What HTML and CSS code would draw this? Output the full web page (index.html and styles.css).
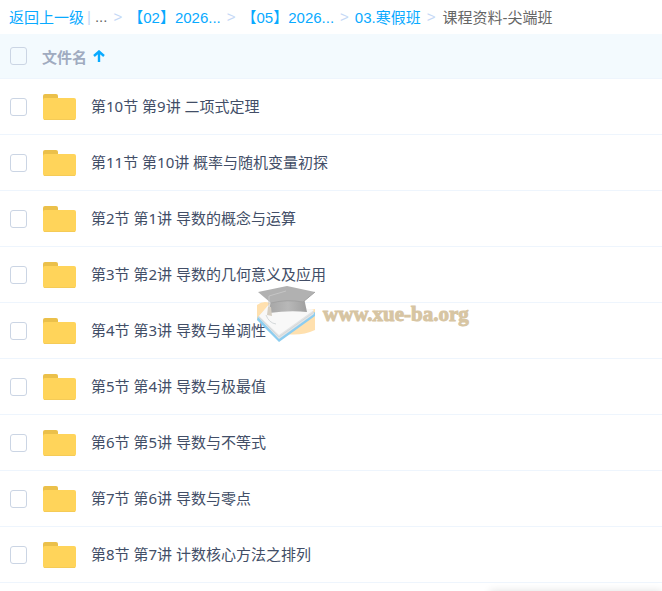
FILE: index.html
```html
<!DOCTYPE html>
<html lang="zh-CN">
<head>
    <meta charset="UTF-8">
    <meta name="viewport" content="width=device-width, initial-scale=1.0">
    <title>课程资料-尖端班</title>
    <link rel="stylesheet" href="styles.css">
</head>
<body>
    <svg class="sprite" aria-hidden="true">
        <symbol id="folder" viewBox="0 0 34 28">
            <path d="M1 10V3Q1 1 3 1H14Q16 1 16 3V10Z" fill="#ebc04a"/>
            <rect x="1" y="5" width="33" height="22" rx="2" fill="#ffd45a"/>
            <path d="M2 26.5H33" stroke="#f5cb57" stroke-width="1"/>
        </symbol>
    </svg>

    <nav class="breadcrumb">
        <a href="#">返回上一级</a>
        <span class="divider">|</span>
        <span class="dots">...</span>
        <span class="arrow">&gt;</span>
        <a href="#">【02】2026...</a>
        <span class="arrow">&gt;</span>
        <a href="#">【05】2026...</a>
        <span class="arrow">&gt;</span>
        <a href="#">03.寒假班</a>
        <span class="arrow">&gt;</span>
        <span class="current">课程资料-尖端班</span>
    </nav>

    <main class="files">
        <table class="file-table">
            <thead>
                <tr>
                    <th class="check"><input type="checkbox" aria-label="全选"></th>
                    <th class="title" colspan="2">
                        <button type="button" class="sort">
                            文件名
                            <svg width="12" height="12" viewBox="0 0 12 12" aria-hidden="true">
                                <path d="M6 12V2M1 6L6 1.500L11 6" fill="none" stroke="#09aaff" stroke-width="2.400"/>
                            </svg>
                        </button>
                    </th>
                </tr>
            </thead>
            <tbody>
                <tr>
                    <td class="check"><input type="checkbox" id="f1"></td>
                    <td class="icon"><svg class="folder"><use href="#folder"/></svg></td>
                    <td class="name"><label for="f1">第10节 第9讲 二项式定理</label></td>
                </tr>
                <tr>
                    <td class="check"><input type="checkbox" id="f2"></td>
                    <td class="icon"><svg class="folder"><use href="#folder"/></svg></td>
                    <td class="name"><label for="f2">第11节 第10讲 概率与随机变量初探</label></td>
                </tr>
                <tr>
                    <td class="check"><input type="checkbox" id="f3"></td>
                    <td class="icon"><svg class="folder"><use href="#folder"/></svg></td>
                    <td class="name"><label for="f3">第2节 第1讲 导数的概念与运算</label></td>
                </tr>
                <tr>
                    <td class="check"><input type="checkbox" id="f4"></td>
                    <td class="icon"><svg class="folder"><use href="#folder"/></svg></td>
                    <td class="name"><label for="f4">第3节 第2讲 导数的几何意义及应用</label></td>
                </tr>
                <tr>
                    <td class="check"><input type="checkbox" id="f5"></td>
                    <td class="icon"><svg class="folder"><use href="#folder"/></svg></td>
                    <td class="name"><label for="f5">第4节 第3讲 导数与单调性</label></td>
                </tr>
                <tr>
                    <td class="check"><input type="checkbox" id="f6"></td>
                    <td class="icon"><svg class="folder"><use href="#folder"/></svg></td>
                    <td class="name"><label for="f6">第5节 第4讲 导数与极最值</label></td>
                </tr>
                <tr>
                    <td class="check"><input type="checkbox" id="f7"></td>
                    <td class="icon"><svg class="folder"><use href="#folder"/></svg></td>
                    <td class="name"><label for="f7">第6节 第5讲 导数与不等式</label></td>
                </tr>
                <tr>
                    <td class="check"><input type="checkbox" id="f8"></td>
                    <td class="icon"><svg class="folder"><use href="#folder"/></svg></td>
                    <td class="name"><label for="f8">第7节 第6讲 导数与零点</label></td>
                </tr>
                <tr>
                    <td class="check"><input type="checkbox" id="f9"></td>
                    <td class="icon"><svg class="folder"><use href="#folder"/></svg></td>
                    <td class="name"><label for="f9">第8节 第7讲 计数核心方法之排列</label></td>
                </tr>
            </tbody>
        </table>

        <!-- site watermark, sits over the rows -->
        <div class="watermark">
            <svg width="60" height="58" viewBox="0 0 60 58" aria-hidden="true">
                <defs>
                    <linearGradient id="cap" x1="0" y1="0" x2="1" y2="0">
                        <stop offset="0" stop-color="#a6a6a6"/>
                        <stop offset="0.5" stop-color="#b8b8b8"/>
                        <stop offset="1" stop-color="#9f9f9f"/>
                    </linearGradient>
                </defs>
                <path d="M1 20Q7 15 14 18L30 30L59 24V45Q46 51 30 49L1 35Z" fill="#ffe0ae"/>
                <path d="M1 35L23 57L59 31V27L23 51L2 31Z" fill="#8ccdf0"/>
                <path d="M2 32L15 18L57 25L58 29L23 54Z" fill="#e2e4e5"/>
                <path d="M3 31L15 17L58 25L23 50Z" fill="#f8f8f8"/>
                <path d="M3 32L23 52L58 27M10 30Q13 38 20 39" fill="none" stroke="#d4d8da" stroke-width="1"/>
                <path d="M15 13Q32 8 48 13L51 27Q34 25 13 28Z" fill="url(#cap)"/>
                <path d="M2 7L31 1L59 7L47 17Q31 14 15 18Z" fill="#b1b1b1"/>
                <path d="M15 18Q31 14 47 17L59 7" fill="none" stroke="#a2a2a2" stroke-width="1"/>
                <path d="M30 6L13 11V25" fill="none" stroke="#c5c5c5" stroke-width="1"/>
                <path d="M12 22L15 22L16 31L11 30Z" fill="#d5cec2"/>
            </svg>
            <span>www.xue-ba.org</span>
        </div>
    </main>

    <div class="bottom-panel"></div>
</body>
</html>
```

FILE: styles.css
```css
body {
    margin: 0;
    font-family: "Noto Sans", "Noto Sans CJK SC", sans-serif;
    font-size: 15px;
    color: #424e67;
    background-color: #fff;
    overflow: hidden;
}

.sprite {
    position: absolute;
    width: 0;
    height: 0;
}

a {
    color: #09aaff;
    text-decoration: none;
}

.breadcrumb {
    display: flex;
    align-items: center;
    height: 32px;
    padding: 0 0 2px 9px;
    font-family: "Liberation Sans", "Noto Sans CJK SC", sans-serif;
    white-space: nowrap;
}

.divider {
    margin: 0 4px 0 3px;
    color: #c4d8f6;
}

.dots,
.current {
    color: #666;
}

.arrow {
    margin: 0 6px;
    color: #c4d8f6;
}

.breadcrumb .current {
    margin-left: 1px;
}

.files {
    position: relative;
}

.file-table {
    width: 100%;
    border-collapse: separate;
    border-spacing: 0;
}

th,
td {
    box-sizing: border-box;
    height: 56px;
    padding: 0;
    border-bottom: 1px solid #eef5fd;
    text-align: left;
}

th {
    height: 45px;
    background-color: #f3fafe;
}

.check {
    width: 42px;
    padding-left: 10px;
}

.icon {
    width: 49px;
}

.name {
    padding-bottom: 2px;
}

input[type="checkbox"] {
    display: block;
    appearance: none;
    box-sizing: border-box;
    width: 17px;
    height: 18px;
    margin: 0;
    border: 1px solid #cbd5e4;
    border-radius: 3px;
    background-color: transparent;
}

input[type="checkbox"]:checked {
    background-color: #09aaff;
}

.sort {
    display: flex;
    align-items: center;
    gap: 6px;
    padding: 0;
    border: 0;
    background: none;
    font: inherit;
    font-weight: 600;
    color: #a0abc0;
}

.folder {
    display: block;
    width: 34px;
    height: 28px;
}

.watermark {
    position: absolute;
    top: 251px;
    left: 256px;
    display: flex;
    align-items: center;
    gap: 7px;
    font-family: "Liberation Serif", serif;
    font-size: 21px;
    font-weight: bold;
    color: #d7c5a3;
    -webkit-text-stroke: 1px #d7c5a3;
    pointer-events: none;
}

.bottom-panel {
    position: fixed;
    right: 0;
    bottom: -20px;
    width: 26%;
    height: 20px;
    box-shadow: 0 0 8px rgba(0, 0, 0, 0.12);
}
```
